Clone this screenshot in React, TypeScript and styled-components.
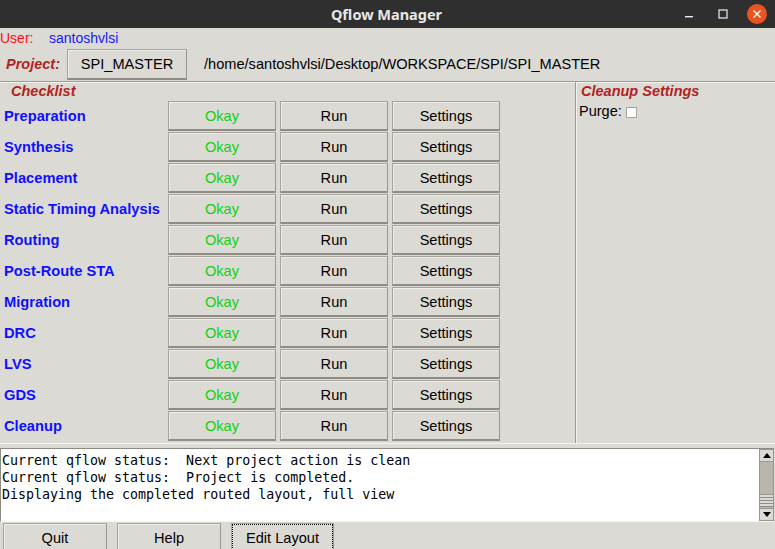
import React from "react";
import styled, { createGlobalStyle } from "styled-components";

const Global = createGlobalStyle`
  html, body { margin: 0; padding: 0; background: #dcdad5; }
  body { font-family: "Liberation Sans", Arial, sans-serif; }
  * { box-sizing: border-box; }
`;

const Window = styled.div`
  width: 775px;
  height: 549px;
  overflow: hidden;
  display: flex;
  flex-direction: column;
  background: #dcdad5;
`;

const TitleBar = styled.div`
  height: 28px;
  flex: none;
  background: #2f2f2f;
  display: grid;
  grid-template-columns: 1fr auto 1fr;
  align-items: center;
`;

const Title = styled.div`
  grid-column: 2;
  font-family: "Noto Sans", "DejaVu Sans", sans-serif;
  font-weight: 700;
  font-size: 14.5px;
  color: #e8e8e6;
  transform: translateX(-1px);
`;

const WinControls = styled.div`
  grid-column: 3;
  justify-self: end;
  display: flex;
  align-items: center;
  gap: 14px;
  padding-right: 8px;
`;

const CtlBox = styled.div`
  width: 20px;
  height: 20px;
  display: flex;
  align-items: center;
  justify-content: center;
`;

const CloseCircle = styled.div`
  width: 20px;
  height: 20px;
  border-radius: 50%;
  background: #e95420;
  display: flex;
  align-items: center;
  justify-content: center;
`;

const UserRow = styled.div`
  height: 19px;
  flex: none;
  display: flex;
  align-items: center;
  font-size: 14px;
`;

const Colored = styled.span<{ $c: string; $w?: number }>`
  color: ${(p) => p.$c};
  display: inline-block;
  width: ${(p) => (p.$w ? `${p.$w}px` : "auto")};
`;

const ProjectRow = styled.div`
  height: 34px;
  flex: none;
  display: flex;
  align-items: flex-start;
  padding-top: 2px;
  font-size: 14px;
`;

const ProjectLabel = styled.span`
  color: #b22222;
  font-weight: 700;
  font-style: italic;
  font-size: 14.5px;
  width: 67px;
  padding-left: 6px;
  line-height: 30px;
`;

const PathText = styled.span`
  margin-left: 17px;
  line-height: 30px;
  color: #000;
  font-size: 14.6px;
`;

const TkButton = styled.button<{ $color?: string; $w: number; $h: number; $focus?: boolean }>`
  width: ${(p) => p.$w}px;
  height: ${(p) => p.$h}px;
  flex: none;
  margin: 0;
  padding: 0;
  background: #dcdad5;
  color: ${(p) => p.$color ?? "#000"};
  font-family: "Liberation Sans", Arial, sans-serif;
  font-size: 14.6px;
  border: 1px solid #a7a49e;
  border-bottom: 2px solid #8f8c86;
  border-right-color: #9a978f;
  box-shadow: inset 1px 1px 0 #eeece8;
  display: flex;
  align-items: center;
  justify-content: center;
  outline: ${(p) => (p.$focus ? "1px dotted #000" : "none")};
  outline-offset: -2px;
`;

const Main = styled.div`
  height: 362px;
  flex: none;
  display: grid;
  grid-template-columns: 575px 2px 1fr;
  border-top: 1px solid #9f9c96;
  box-shadow: inset 0 1px 0 #f4f3f0;
`;

const Divider = styled.div`
  background: linear-gradient(to right, #9c9993 0 1px, #f2f1ee 1px 2px);
`;

const Checklist = styled.div`
  display: flex;
  flex-direction: column;
`;

const SectionTitle = styled.div<{ $pl: number }>`
  height: 19px;
  padding-left: ${(p) => p.$pl}px;
  color: #b22222;
  font-weight: 700;
  font-style: italic;
  font-size: 14.5px;
  line-height: 19px;
`;

const Rows = styled.div`
  display: flex;
  flex-direction: column;
  gap: 1px;
`;

const Row = styled.div`
  display: grid;
  grid-template-columns: 160px 108px 108px 108px;
  column-gap: 4px;
  padding-left: 4px;
  align-items: center;
`;

const StepLabel = styled.span`
  color: #1010ff;
  font-weight: 700;
  font-size: 14.7px;
  white-space: nowrap;
`;

const CleanupPanel = styled.div`
  display: flex;
  flex-direction: column;
  padding-left: 2px;
`;

const PurgeRow = styled.div`
  display: flex;
  align-items: center;
  gap: 4px;
  font-size: 14.5px;
  color: #000;
  height: 22px;
  margin-top: -1px;
`;

const CheckBox = styled.span`
  width: 11px;
  height: 11px;
  background: #fff;
  border: 1px solid #a7a49e;
  display: inline-block;
  margin-top: 2px;
`;

const ConsoleArea = styled.div`
  height: 79px;
  flex: none;
  border-top: 1px solid #f4f3f0;
  padding: 4px 1px 0 0;
`;

const ConsoleFrame = styled.div`
  height: 74px;
  display: flex;
  border-top: 1px solid #8e8b85;
  border-left: 1px solid #8e8b85;
  border-bottom: 1px solid #f4f3f0;
`;

const ConsoleText = styled.pre`
  flex: 1;
  margin: 0;
  padding: 3px 0 0 1px;
  background: #fff;
  font-family: "DejaVu Sans Mono", monospace;
  font-size: 13.3px;
  line-height: 17px;
  color: #000;
  overflow: hidden;
`;

const ScrollBar = styled.div`
  width: 15px;
  display: flex;
  flex-direction: column;
  background: #c8c5bd;
  border: 1px solid #9a978f;
`;

const ScrollArrow = styled.div`
  height: 12px;
  flex: none;
  background: #dcdad5;
  display: flex;
  align-items: center;
  justify-content: center;
  border-bottom: 1px solid #9a978f;
  &:last-child {
    border-bottom: none;
    border-top: 1px solid #9a978f;
  }
`;

const Thumb = styled.div`
  flex: 1;
  background: #bab6ac;
  display: flex;
  flex-direction: column;
  justify-content: flex-end;
`;

const Grip = styled.div`
  height: 13px;
  margin-bottom: 1px;
  background: repeating-linear-gradient(
    to bottom,
    #dcdad5 0 2px,
    #8f8c86 2px 3px
  );
  border-top: 1px solid #9a978f;
`;

const BottomBar = styled.div`
  display: flex;
  gap: 10px;
  padding-left: 3px;
  padding-top: 1px;
`;

const steps = [
  "Preparation",
  "Synthesis",
  "Placement",
  "Static Timing Analysis",
  "Routing",
  "Post-Route STA",
  "Migration",
  "DRC",
  "LVS",
  "GDS",
  "Cleanup",
];

export default function App() {
  return (
    <>
      <Global />
      <Window>
        <TitleBar>
          <Title>Qflow Manager</Title>
          <WinControls>
            <CtlBox>
              <svg width="10" height="10" viewBox="0 0 10 10">
                <rect x="1" y="7" width="8" height="1.4" fill="#eee" />
              </svg>
            </CtlBox>
            <CtlBox>
              <svg width="10" height="10" viewBox="0 0 10 10">
                <rect x="1" y="1" width="8" height="8" fill="none" stroke="#eee" strokeWidth="1.2" />
              </svg>
            </CtlBox>
            <CloseCircle>
              <svg width="10" height="10" viewBox="0 0 10 10">
                <path d="M1.5 1.5 L8.5 8.5 M8.5 1.5 L1.5 8.5" stroke="#fff" strokeWidth="1.4" />
              </svg>
            </CloseCircle>
          </WinControls>
        </TitleBar>

        <UserRow>
          <Colored $c="#ff1010" $w={49}>User:</Colored>
          <Colored $c="#1818ff">santoshvlsi</Colored>
        </UserRow>

        <ProjectRow>
          <ProjectLabel>Project:</ProjectLabel>
          <TkButton $w={120} $h={31}>SPI_MASTER</TkButton>
          <PathText>/home/santoshvlsi/Desktop/WORKSPACE/SPI/SPI_MASTER</PathText>
        </ProjectRow>

        <Main>
          <Checklist>
            <SectionTitle $pl={11}>Checklist</SectionTitle>
            <Rows>
              {steps.map((s) => (
                <Row key={s}>
                  <StepLabel>{s}</StepLabel>
                  <TkButton $w={108} $h={30} $color="#12d012">Okay</TkButton>
                  <TkButton $w={108} $h={30}>Run</TkButton>
                  <TkButton $w={108} $h={30}>Settings</TkButton>
                </Row>
              ))}
            </Rows>
          </Checklist>
          <Divider />
          <CleanupPanel>
            <SectionTitle $pl={2}>Cleanup Settings</SectionTitle>
            <PurgeRow>
              Purge: <CheckBox />
            </PurgeRow>
          </CleanupPanel>
        </Main>

        <ConsoleArea>
          <ConsoleFrame>
            <ConsoleText>
              {"Current qflow status:  Next project action is clean\nCurrent qflow status:  Project is completed.\nDisplaying the completed routed layout, full view"}
            </ConsoleText>
            <ScrollBar>
              <ScrollArrow>
                <svg width="8" height="5" viewBox="0 0 8 5">
                  <path d="M0 5 L4 0 L8 5 Z" fill="#000" />
                </svg>
              </ScrollArrow>
              <Thumb>
                <Grip />
              </Thumb>
              <ScrollArrow>
                <svg width="8" height="5" viewBox="0 0 8 5">
                  <path d="M0 0 L8 0 L4 5 Z" fill="#000" />
                </svg>
              </ScrollArrow>
            </ScrollBar>
          </ConsoleFrame>
        </ConsoleArea>

        <BottomBar>
          <TkButton $w={104} $h={30}>Quit</TkButton>
          <TkButton $w={104} $h={30}>Help</TkButton>
          <TkButton $w={103} $h={30} $focus>Edit Layout</TkButton>
        </BottomBar>
      </Window>
    </>
  );
}
